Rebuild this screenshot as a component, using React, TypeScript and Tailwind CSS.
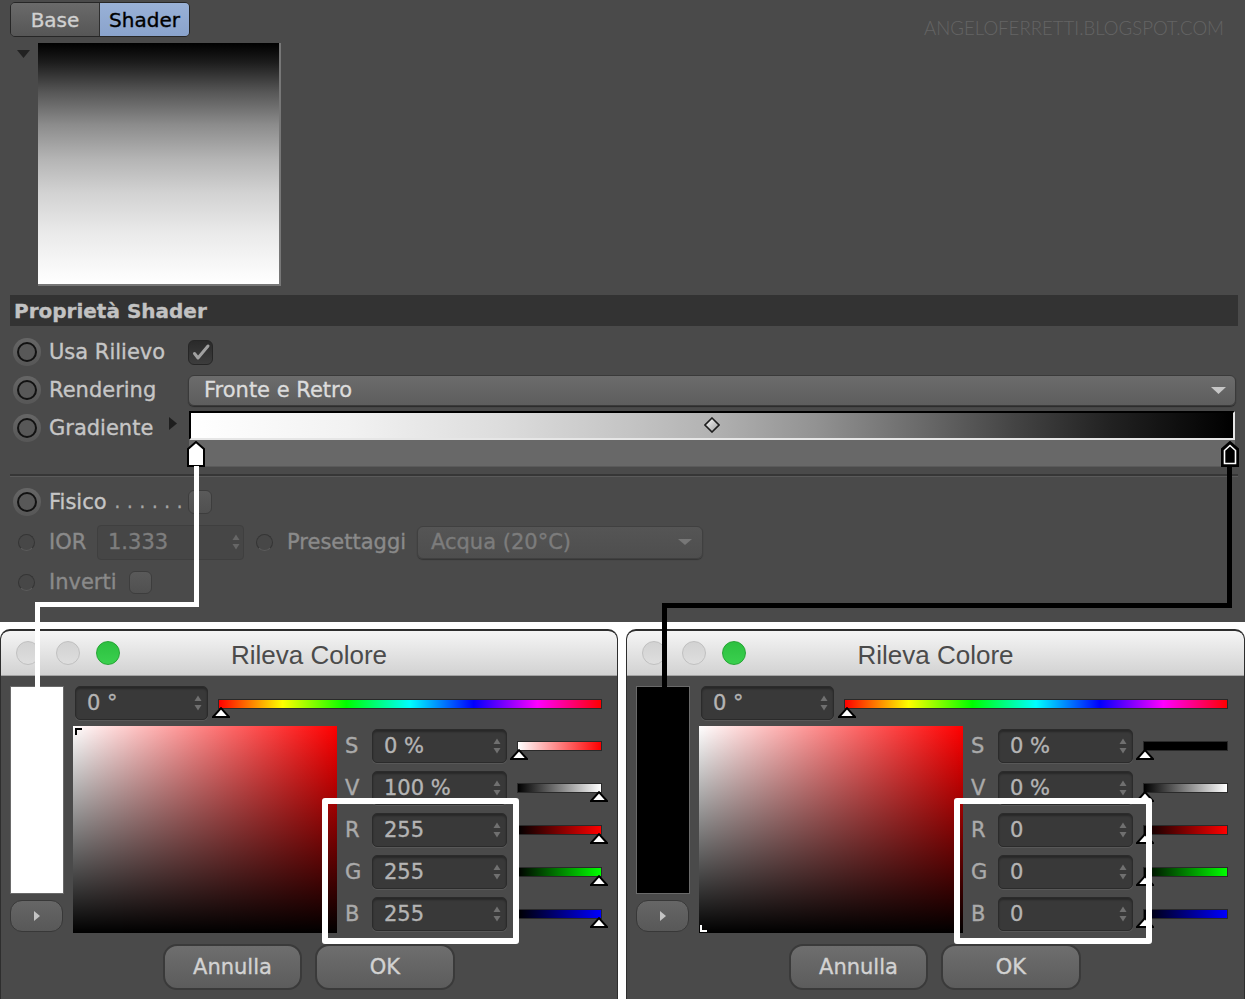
import React from "react";

const DV = "font-['DejaVu_Sans',sans-serif]";

function Spin() {
  return (
    <svg width="8" height="18" viewBox="0 0 8 18" className="shrink-0">
      <path d="M4 1.5L7.5 7H0.5Z" fill="#707070" />
      <path d="M4 16.5L7.5 11H0.5Z" fill="#707070" />
    </svg>
  );
}

function Marker() {
  return (
    <svg width="18" height="11" viewBox="0 0 18 11">
      <polygon points="9,1.2 17,10 1,10" fill="#fff" stroke="#000" strokeWidth="2" />
    </svg>
  );
}

function BigRadio() {
  return (
    <div className="flex h-[28px] w-[28px] shrink-0 items-center justify-center rounded-full bg-linear-to-b from-[#666666] to-[#575757]">
      <div className="h-[20px] w-[20px] rounded-full border-2 border-[#121212] bg-[#585858]" />
    </div>
  );
}

function SmallRadio() {
  return <div className="h-[17px] w-[17px] shrink-0 rounded-full border border-[#353535] border-b-[#5c5c5c] bg-[#474747]" />;
}

function CheckOn() {
  return (
    <div className="flex h-[25px] w-[25px] items-center justify-center rounded-[6px] border border-[#262626] bg-linear-to-b from-[#2a2a2a] to-[#3d3d3d]">
      <svg width="20" height="18" viewBox="0 0 20 18">
        <path d="M3.5 10.5 L7 15 L17 3" stroke="#a0a0a0" strokeWidth="3" fill="none" strokeLinecap="round" strokeLinejoin="round" />
      </svg>
    </div>
  );
}

function CheckOffBig() {
  return <div className="h-[24px] w-[24px] rounded-[6px] border border-[#3d3d3d] bg-linear-to-b from-[#5a5a5a] to-[#505050]" />;
}

function CheckOffSmall() {
  return <div className="h-[23px] w-[23px] rounded-[6px] border border-[#3d3d3d] bg-linear-to-b from-[#5a5a5a] to-[#505050]" />;
}

function Field({ text, cls }: { text: string; cls: string }) {
  return (
    <div className={`flex items-center justify-between rounded-[5px] border border-[#2b2b2b] bg-[#393939] pl-[11px] pr-[5px] shadow-[0_1px_0_#585858,inset_0_2px_2px_rgba(0,0,0,0.3)] ${cls}`}>
      <span className="text-[21px] leading-none text-[#b4b4b4]">{text}</span>
      <Spin />
    </div>
  );
}

type SliderSpec = { bg: string; right: boolean };

function Slider({ bg, right }: SliderSpec) {
  return (
    <div className={`relative ml-[10px] h-[10px] w-[85px] border border-[#2a2a2a] ${bg}`}>
      <div className={right ? "absolute right-[-7px] top-[7px]" : "absolute left-[-8px] top-[7px]"}>
        <Marker />
      </div>
    </div>
  );
}

type DialogProps = {
  dark: boolean;
  widthCls: string;
  hlCls: string;
  values: string[];
  sliders: SliderSpec[];
};

function Dialog({ dark, widthCls, hlCls, values, sliders }: DialogProps) {
  const labels = ["S", "V", "R", "G", "B"];
  return (
    <div className={`relative h-[370px] shrink-0 overflow-hidden rounded-t-[10px] border-x border-t-2 border-[#2e2e2e] bg-[#4a4a4a] ${widthCls} ${DV}`}>
      <div className="grid h-[45px] grid-cols-[140px_1fr_140px] items-center rounded-t-[8px] border-b border-[#a3a3a3] bg-linear-to-b from-[#f5f5f5] to-[#d2d2d2]">
        <div className="flex gap-[16px] pl-[15px]">
          <div className="h-[24px] w-[24px] rounded-full border border-[#c0c0c0] bg-linear-to-b from-[#d2d2d2] to-[#dedede]" />
          <div className="h-[24px] w-[24px] rounded-full border border-[#c0c0c0] bg-linear-to-b from-[#d2d2d2] to-[#dedede]" />
          <div className="h-[24px] w-[24px] rounded-full border border-[#25a534] bg-linear-to-b from-[#2cc040] to-[#3ad04e]" />
        </div>
        <div className="mt-[3px] text-center font-['Liberation_Sans',Arial,sans-serif] text-[26px] leading-none text-[#4b4b4b] [-webkit-text-stroke-width:0px]">Rileva Colore</div>
        <div />
      </div>

      <div className="flex pl-[9px] pt-[10px]">
        <div className="flex w-[54px] flex-col">
          <div className={`h-[208px] w-[54px] border border-[#6a6a6a] ${dark ? "bg-black" : "bg-white"}`} />
          <div className="mt-[6px] flex h-[32px] w-[53px] items-center justify-center rounded-[12px] border border-[#383838] bg-linear-to-b from-[#666666] to-[#585858]">
            <svg width="6" height="10" viewBox="0 0 6 10">
              <polygon points="0,0 6,5 0,10" fill="#c4c4c4" />
            </svg>
          </div>
        </div>

        <div className="ml-[9px] flex flex-col">
          <div className="flex h-[34px]">
            <Field text="0 °" cls="ml-[2px] h-[34px] w-[133px]" />
            <div className="relative ml-[10px] mt-[13px] h-[10px] w-[384px] border border-[#2a2a2a] bg-[linear-gradient(to_right,#f00,#ff0,#0f0,#0ff,#00f,#f0f,#f00)]">
              <div className="absolute left-[-7px] top-[7px]">
                <Marker />
              </div>
            </div>
          </div>
          <div className="mt-[6px] flex">
            <div className="relative h-[207px] w-[264px] bg-[linear-gradient(to_bottom,rgba(0,0,0,0),#000),linear-gradient(to_right,#fff,#f00)]">
              {dark ? (
                <div className="absolute bottom-[1px] left-[1px] h-[7px] w-[7px] border-b-2 border-l-2 border-white" />
              ) : (
                <div className="absolute left-[2px] top-[2px] h-[7px] w-[7px] border-l-2 border-t-2 border-black" />
              )}
            </div>
            <div className="ml-[8px] flex h-[207px] flex-col gap-[8px] pt-[3px]">
              {labels.map((l, i) => (
                <div key={l} className="flex h-[34px] shrink-0 items-center">
                  <span className="w-[27px] text-[21px] leading-none text-[#aaaaaa]">{l}</span>
                  <Field text={values[i]} cls="h-[34px] w-[135px]" />
                  <Slider bg={sliders[i].bg} right={sliders[i].right} />
                </div>
              ))}
            </div>
          </div>
        </div>
      </div>

      <div className="mt-[11px] flex gap-[13px] pl-[162px]">
        <div className="flex h-[46px] w-[139px] items-center justify-center rounded-[14px] border-2 border-[#3a3a3a] bg-linear-to-b from-[#6e6e6e] to-[#5c5c5c] text-[21px] leading-none text-[#d2d2d2]">Annulla</div>
        <div className="flex h-[46px] w-[140px] items-center justify-center rounded-[14px] border-2 border-[#3a3a3a] bg-linear-to-b from-[#6e6e6e] to-[#5c5c5c] text-[21px] leading-none text-[#d2d2d2]">OK</div>
      </div>

      <div className={`absolute top-[167px] h-[146px] rounded-[3px] border-[6px] border-white ${hlCls}`} />
    </div>
  );
}

export default function App() {
  return (
    <div className={`relative h-[999px] w-[1245px] overflow-hidden bg-white [-webkit-text-stroke-width:0.35px] ${DV}`}>
      {/* top panel */}
      <div className="relative h-[622px] bg-[#4a4a4a]">
        <div className="absolute right-[21px] top-[19px] font-['Lato',sans-serif] text-[18.6px] font-light leading-none text-[#646464] [-webkit-text-stroke-width:0px]">ANGELOFERRETTI.BLOGSPOT.COM</div>

        <div className="pl-[10px] pt-[2px]">
          <div className="flex h-[35px] w-[180px] overflow-hidden rounded-[5px] border border-[#262626] text-[20px] leading-none">
            <div className="flex w-[89px] items-center justify-center border-r border-[#2e2e2e] bg-linear-to-b from-[#6a6a6a] to-[#565656] text-[#d0d0d0]">Base</div>
            <div className="flex flex-1 items-center justify-center bg-linear-to-b from-[#99b1d7] to-[#8aa3cc] text-black">Shader</div>
          </div>
        </div>

        <div className="mt-[6px] flex">
          <svg className="ml-[17px] mt-[7px]" width="13" height="8" viewBox="0 0 13 8">
            <polygon points="0,0 13,0 6.5,8" fill="#222" />
          </svg>
          <div className="ml-[8px] h-[243px] w-[243px] border-b-2 border-r-2 border-[#777777] bg-[linear-gradient(to_bottom,#000_0%,#1c1c1c_8%,#555_20%,#8c8c8c_34%,#b4b4b4_48%,#d2d2d2_62%,#e9e9e9_78%,#fff_100%)]" />
        </div>

        <div className="ml-[10px] mt-[9px] flex h-[31px] w-[1228px] items-center bg-[#333333] pl-[4px] text-[20px] font-bold leading-none text-[#c2c2c2]">Proprietà Shader</div>

        <div className="mt-[7px] flex flex-col text-[21px] leading-none">
          {/* Usa Rilievo */}
          <div className="flex h-[38px] items-center">
            <div className="flex w-[188px] shrink-0 items-center pl-[13px]">
              <BigRadio />
              <span className="ml-[8px] text-[#c6c6c6]">Usa Rilievo</span>
            </div>
            <CheckOn />
          </div>

          {/* Rendering */}
          <div className="flex h-[38px] items-center">
            <div className="flex w-[188px] shrink-0 items-center pl-[13px]">
              <BigRadio />
              <span className="ml-[8px] text-[#c6c6c6]">Rendering</span>
            </div>
            <div className="flex h-[31px] w-[1048px] items-center justify-between rounded-[6px] border border-[#3a3a3a] bg-linear-to-b from-[#6c6c6c] to-[#5d5d5d] pl-[15px] pr-[9px] shadow-[0_1px_1px_rgba(0,0,0,0.45)]">
              <span className="text-[#dcdcdc]">Fronte e Retro</span>
              <svg width="15" height="7" viewBox="0 0 15 7">
                <polygon points="0,0 15,0 7.5,7" fill="#c6c6c6" />
              </svg>
            </div>
          </div>

          {/* Gradiente */}
          <div className="flex h-[60px]">
            <div className="flex h-[38px] w-[188px] shrink-0 items-center pl-[13px]">
              <BigRadio />
              <span className="ml-[8px] text-[#c6c6c6]">Gradiente</span>
              <svg className="ml-auto mr-[11px] mt-[-9px]" width="8" height="13" viewBox="0 0 8 13">
                <polygon points="0,0 8,6.5 0,13" fill="#1e1e1e" />
              </svg>
            </div>
            <div className="relative ml-[1px] mt-[2px] w-[1046px]">
              <div className="h-[29px] border-b-2 border-l-2 border-r-2 border-t-2 border-b-[#e6e6e6] border-l-black border-r-[#e6e6e6] border-t-black bg-[linear-gradient(to_right,#fff_0%,#f2f2f2_15%,#dcdcdc_30%,#c4c4c4_42%,#b2b2b2_50%,#929292_60%,#666_71%,#444_79%,#222_88%,#000_100%)]" />
              <div className="h-[27px] border-b border-[#5a5a5a] bg-[#686868]" />
              <svg className="absolute left-[515px] top-[6px]" width="16" height="16" viewBox="0 0 16 16">
                <defs>
                  <linearGradient id="dg" x1="0" y1="0" x2="1" y2="1">
                    <stop offset="0" stopColor="#ffffff" />
                    <stop offset="1" stopColor="#9a9a9a" />
                  </linearGradient>
                </defs>
                <polygon points="8,1 15,8 8,15 1,8" fill="url(#dg)" stroke="#1e1e1e" strokeWidth="1.6" />
              </svg>
              <svg className="absolute left-[-2px] top-[30px]" width="18" height="26" viewBox="0 0 18 26">
                <path d="M9 1 L17 8 L17 25 L1 25 L1 8 Z" fill="#fff" stroke="#000" strokeWidth="2" />
              </svg>
              <svg className="absolute left-[1032px] top-[30px]" width="18" height="26" viewBox="0 0 18 26">
                <path d="M9 1 L17 8 L17 25 L1 25 L1 8 Z" fill="#000" stroke="#000" strokeWidth="2" />
                <path d="M9 4.5 L14.5 9.5 L14.5 22.5 L3.5 22.5 L3.5 9.5 Z" fill="#000" stroke="#fff" strokeWidth="1.6" />
              </svg>
            </div>
          </div>

          <div className="ml-[10px] mt-[5px] h-[3px] w-[1228px] border-b border-t-2 border-b-[#5a5a5a] border-t-[#363636]" />

          {/* Fisico */}
          <div className="mt-[6px] flex h-[38px] items-center">
            <div className="flex w-[188px] shrink-0 items-center whitespace-nowrap pl-[13px]">
              <BigRadio />
              <span className="ml-[8px] text-[#c6c6c6]">Fisico</span>
              <span className="ml-[8px] whitespace-nowrap text-[18px] tracking-[0.5px] text-[#a6a6a6]">. . . . . .</span>
            </div>
            <CheckOffBig />
          </div>

          {/* IOR */}
          <div className="flex h-[42px] items-center">
            <div className="flex w-[97px] shrink-0 items-center pl-[18px]">
              <SmallRadio />
              <span className="ml-[14px] text-[#8a8a8a]">IOR</span>
            </div>
            <div className="flex h-[35px] w-[147px] items-center justify-between rounded-[4px] border border-[#3f3f3f] bg-[#464646] pl-[10px] pr-[3px]">
              <span className="text-[#7e7e7e]">1.333</span>
              <svg width="8" height="18" viewBox="0 0 8 18">
                <path d="M4 1.5L7.5 7H0.5Z" fill="#666" />
                <path d="M4 16.5L7.5 11H0.5Z" fill="#666" />
              </svg>
            </div>
            <div className="ml-[12px]">
              <SmallRadio />
            </div>
            <span className="ml-[14px] w-[130px] text-[#8a8a8a]">Presettaggi</span>
            <div className="flex h-[33px] w-[286px] items-center justify-between rounded-[6px] border border-[#404040] bg-linear-to-b from-[#555555] to-[#4e4e4e] pl-[13px] pr-[10px] shadow-[0_1px_1px_rgba(0,0,0,0.3)]">
              <span className="text-[#7c7c7c]">Acqua (20°C)</span>
              <svg width="14" height="6" viewBox="0 0 14 6">
                <polygon points="0,0 14,0 7,6" fill="#777" />
              </svg>
            </div>
          </div>

          {/* Inverti */}
          <div className="flex h-[38px] items-center">
            <div className="flex items-center pl-[18px]">
              <SmallRadio />
              <span className="ml-[14px] text-[#8a8a8a]">Inverti</span>
            </div>
            <div className="ml-[12px]">
              <CheckOffSmall />
            </div>
          </div>
        </div>
      </div>

      {/* dialogs */}
      <div className="flex h-[377px] gap-[8px] bg-white pt-[7px]">
        <Dialog
          dark={false}
          widthCls="w-[618px]"
          hlCls="left-[321px] w-[197px]"
          values={["0 %", "100 %", "255", "255", "255"]}
          sliders={[
            { bg: "bg-[linear-gradient(to_right,#fff,#f00)]", right: false },
            { bg: "bg-[linear-gradient(to_right,#000,#fff)]", right: true },
            { bg: "bg-[linear-gradient(to_right,#000,#f00)]", right: true },
            { bg: "bg-[linear-gradient(to_right,#000,#0f0)]", right: true },
            { bg: "bg-[linear-gradient(to_right,#000,#00f)]", right: true },
          ]}
        />
        <Dialog
          dark={true}
          widthCls="w-[619px]"
          hlCls="left-[327px] w-[198px]"
          values={["0 %", "0 %", "0", "0", "0"]}
          sliders={[
            { bg: "bg-black", right: false },
            { bg: "bg-[linear-gradient(to_right,#000,#fff)]", right: false },
            { bg: "bg-[linear-gradient(to_right,#000,#f00)]", right: false },
            { bg: "bg-[linear-gradient(to_right,#000,#0f0)]", right: false },
            { bg: "bg-[linear-gradient(to_right,#000,#00f)]", right: false },
          ]}
        />
      </div>

      {/* connector lines */}
      <div className="absolute left-[194px] top-[466px] z-10 h-[141px] w-[5px] bg-white" />
      <div className="absolute left-[35px] top-[602px] z-10 h-[5px] w-[164px] bg-white" />
      <div className="absolute left-[35px] top-[602px] z-10 h-[85px] w-[5px] bg-white" />
      <div className="absolute left-[1227px] top-[466px] z-10 h-[142px] w-[5px] bg-black" />
      <div className="absolute left-[662px] top-[603px] z-10 h-[5px] w-[570px] bg-black" />
      <div className="absolute left-[662px] top-[603px] z-10 h-[84px] w-[5px] bg-black" />
    </div>
  );
}
